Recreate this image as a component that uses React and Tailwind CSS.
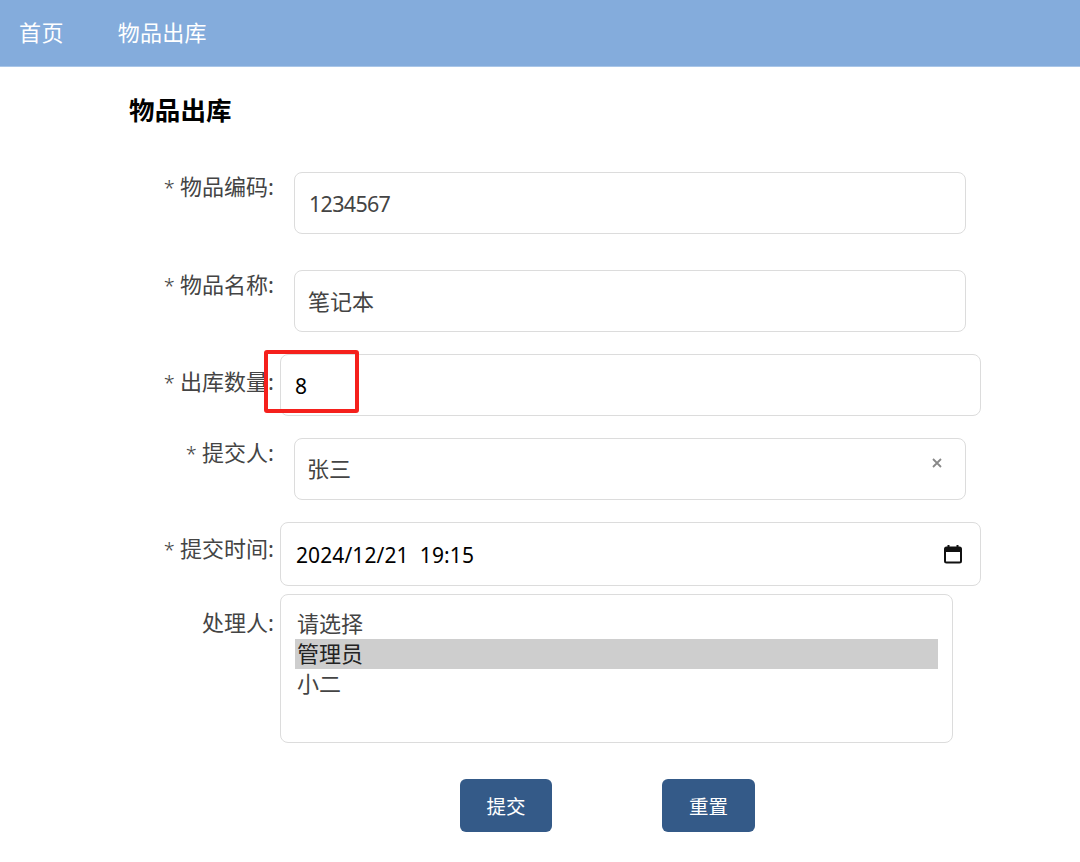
const FONT = "font-['Noto_Sans','Noto_Sans_CJK_SC',sans-serif]";

function Star() {
  return <span className="text-[20px] font-light">* </span>;
}

function Field({ label, required, labelClass = "", className = "", children }) {
  return (
    <div className={`flex ${className}`}>
      <label className={`w-[274px] shrink-0 text-right text-[22px] leading-[28px] text-[#444] ${labelClass}`}>
        {required && <Star />}
        {label}
      </label>
      {children}
    </div>
  );
}

function TextBox({ value, valueClass = "", className = "", children }) {
  return (
    <div className={`flex h-[62px] items-center justify-between rounded-[8px] border border-[#dcdcdc] bg-white pl-[13px] text-[#444] ${className}`}>
      <span className={valueClass}>{value}</span>
      {children}
    </div>
  );
}

export default function App() {
  return (
    <div className={`relative min-h-[862px] bg-white ${FONT}`}>
      <nav className="flex h-[67px] items-center border-b border-[#a9c6e8] bg-[#84acdc] pb-[2px] pl-[19px] text-[22px] text-white">
        <a className="tracking-[0.4px]">首页</a>
        <a className="ml-[54px] tracking-[0.2px]">物品出库</a>
      </nav>

      <h1 className="ml-[129px] mt-[24px] text-[25.5px] leading-[38px] font-bold tracking-[0.2px] text-black">物品出库</h1>

      <form className="mt-[43px]">
        <Field required label="物品编码:">
          <TextBox value="1234567" valueClass="pl-[1px] pt-[2px] text-[21.5px] tracking-[-0.7px]" className="ml-5 w-[672px]" />
        </Field>

        <Field required label="物品名称:" className="mt-9">
          <TextBox value="笔记本" valueClass="text-[22px]" className="ml-5 w-[672px]" />
        </Field>

        <Field required label="出库数量:" labelClass="mt-[13px]" className="relative mt-[22px]">
          <TextBox value="8" valueClass="pl-[1px] pt-[4px] text-[21px] text-black" className="ml-[6px] w-[701px]" />
          {/* red annotation box from the screenshot */}
          <div className="absolute left-[264px] top-[-4px] h-[63px] w-[95px] rounded-[3px] border-[4px] border-[#f5201c]" />
        </Field>

        <Field required label="提交人:" className="mt-[22px]">
          <TextBox value="张三" valueClass="-ml-[1px] pb-[1px] text-[22px]" className="ml-5 w-[672px] pr-[23px]">
            <svg width="10" height="10" viewBox="0 0 10 10" className="mb-[12px]">
              <path d="M1 1l8 8M9 1l-8 8" stroke="#888" strokeWidth="1.8" fill="none" />
            </svg>
          </TextBox>
        </Field>

        <Field required label="提交时间:" labelClass="mt-[12px]" className="mt-[22px]">
          <div className="ml-[6px] flex h-[64px] w-[701px] items-center justify-between rounded-[8px] border border-[#dcdcdc] pl-[15px] pr-[17px] text-black">
            <span className="pt-[4px] text-[21px] tracking-[0.1px]">2024/12/21&nbsp; 19:15</span>
            <svg width="20" height="20" viewBox="0 0 20 20" fill="none">
              <rect x="2" y="3.5" width="16" height="15" rx="1.5" stroke="#111" strokeWidth="2" />
              <path d="M2 6h16" stroke="#111" strokeWidth="4" />
              <path d="M5.5 1v3M14.5 1v3" stroke="#111" strokeWidth="2" />
            </svg>
          </div>
        </Field>

        <Field label="处理人:" labelClass="mt-[14px]" className="mt-[8px]">
          <div className="ml-[6px] h-[149px] w-[673px] rounded-[8px] border border-[#dcdcdc] px-[14px] pt-[14px] text-[22px] leading-[28px] text-[#444]">
            <div className="pb-[2px] pl-[2px]">请选择</div>
            <div className="bg-[#cecece] pb-[2px] pl-[2px] text-[#222]">管理员</div>
            <div className="pb-[2px] pl-[2px]">小二</div>
          </div>
        </Field>

        <div className="mt-9 flex pl-[460px]">
          <button type="button" className="h-[53px] w-[92px] rounded-[6px] bg-[#345a88] pt-[3px] text-[19.5px] text-white">提交</button>
          <button type="button" className="ml-[110px] h-[53px] w-[93px] rounded-[6px] bg-[#345a88] pt-[3px] text-[19.5px] text-white">重置</button>
        </div>
      </form>
    </div>
  );
}
